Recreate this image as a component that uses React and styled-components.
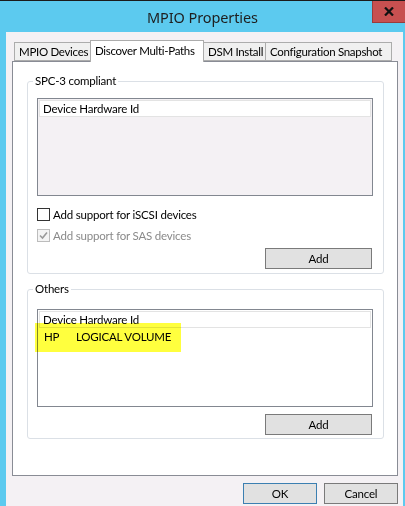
import React from "react";
import styled, { createGlobalStyle } from "styled-components";

/* Page */
const GlobalStyle = createGlobalStyle`
  html, body {
    margin: 0;
    padding: 0;
    background: #5ccaef;
  }
  * {
    box-sizing: border-box;
  }
`;

const UI_FONT = `Lato, "Noto Sans", "Liberation Sans", sans-serif`;

const Window = styled.div`
  width: 405px;
  height: 506px;
  overflow: hidden;
  display: flex;
  flex-direction: column;
  background: #5ccaef;
  border-top: 1px solid #1b1b1b;
  font-family: ${UI_FONT};
  font-size: 11.5px;
  letter-spacing: -0.2px;
  color: #000;
`;

const TitleBar = styled.div`
  height: 31px;
  flex: none;
  display: grid;
  grid-template-columns: 1fr auto 1fr;
  align-items: start;
`;

const Title = styled.div`
  grid-column: 2;
  padding-top: 6px;
  font-family: "Noto Sans", "Open Sans", sans-serif;
  font-size: 14.5px;
  color: #1e1e1e;
  letter-spacing: -0.1px;
`;

const CloseButton = styled.div`
  grid-column: 3;
  justify-self: end;
  width: 33px;
  height: 22px;
  background: #c75050;
  border-left: 1px solid #9b3b3b;
  border-bottom: 1px solid #9b3b3b;
  display: flex;
  align-items: center;
  justify-content: center;
`;

const Client = styled.div`
  flex: 1;
  margin: 0 2px 0 6px;
  background: #f4f1f4;
  padding: 8px 5px 0 6px;
  display: flex;
  flex-direction: column;
`;

/* Tabs */
const TabRow = styled.div`
  display: flex;
  align-items: flex-end;
  height: 21px;
  padding-left: 2px;
`;

const Tab = styled.div`
  position: relative;
  z-index: ${(p) => (p.$active ? 2 : 1)};
  width: ${(p) => p.$width}px;
  height: ${(p) => (p.$active ? 22 : 19)}px;
  margin-bottom: ${(p) => (p.$active ? -1 : 0)}px;
  margin-left: -1px;
  border: 1px solid #acacac;
  border-bottom: ${(p) => (p.$active ? "none" : "1px solid #acacac")};
  background: ${(p) => (p.$active ? "#ffffff" : "#f0f0f0")};
  padding: ${(p) => (p.$active ? "3px 0 0 4px" : "2px 0 0 4px")};
  letter-spacing: -0.3px;
  white-space: nowrap;
  overflow: hidden;
  &:first-child {
    margin-left: 0;
  }
`;

const Panel = styled.div`
  height: 415px;
  flex: none;
  border: 1px solid #898c95;
  background: #ffffff;
  padding: 12px 13px 0 14px;
  display: flex;
  flex-direction: column;
`;

/* Group boxes */
const Group = styled.fieldset`
  margin: ${(p) => p.$top}px 0 0 0;
  padding: 0 10px ${(p) => p.$bottom}px 9px;
  border: 1px solid #dbe0e6;
  border-radius: 3px;
  min-width: 0;
`;

const Legend = styled.legend`
  margin-left: -4px;
  padding: 0 2px;
  line-height: 14px;
  color: #000;
`;

const ListBox = styled.div`
  position: relative;
  margin-top: ${(p) => p.$top}px;
  height: 98px;
  border: 1px solid #828790;
  background: ${(p) => (p.$disabled ? "#f4f1f4" : "#ffffff")};
  padding: 1px;
`;

const ListHeader = styled.div`
  height: 17px;
  border: 1px solid #e3e3e3;
  background: #ffffff;
  padding-left: 3px;
  line-height: 15px;
  white-space: nowrap;
`;

const ListRow = styled.div`
  display: flex;
  height: 17px;
  line-height: 17px;
  padding-left: 5px;
  white-space: nowrap;
`;

const Cell = styled.span`
  width: ${(p) => (p.$width ? `${p.$width}px` : "auto")};
  flex: none;
`;

const Highlight = styled.div`
  position: absolute;
  left: -3px;
  top: 13px;
  width: 146px;
  height: 29px;
  background: #ffff3e;
  mix-blend-mode: multiply;
  pointer-events: none;
`;

/* Checkboxes */
const CheckRow = styled.label`
  display: flex;
  align-items: center;
  gap: 3px;
  height: 13px;
  margin-top: ${(p) => p.$top}px;
  color: ${(p) => (p.$disabled ? "#8a8a8a" : "#000")};
  white-space: nowrap;
`;

const Box = styled.span`
  width: 13px;
  height: 13px;
  flex: none;
  border: 1px solid ${(p) => (p.$disabled ? "#bcbcbc" : "#333333")};
  background: ${(p) => (p.$disabled ? "#f4f4f4" : "#ffffff")};
  display: flex;
  align-items: center;
  justify-content: center;
`;

/* Buttons */
const ButtonRow = styled.div`
  display: flex;
  justify-content: flex-end;
  gap: ${(p) => p.$gap || 0}px;
  margin-top: ${(p) => p.$top}px;
  margin-right: ${(p) => p.$right || 0}px;
`;

const Button = styled.div`
  width: ${(p) => p.$width}px;
  height: 21px;
  border: 1px solid ${(p) => (p.$default ? "#3c7fb1" : "#7a7a7a")};
  background: #e1e1e1;
  display: flex;
  align-items: center;
  justify-content: center;
  padding-bottom: 1px;
`;

const TABS = [
  { label: "MPIO Devices", width: 77 },
  { label: "Discover Multi-Paths", width: 114, active: true },
  { label: "DSM Install", width: 63 },
  { label: "Configuration Snapshot", width: 127 },
];

const Check = ({ color }) => (
  <svg width="9" height="9" viewBox="0 0 9 9">
    <path d="M1 4.5 L3.5 7 L8 1.5" fill="none" stroke={color} strokeWidth="1.6" />
  </svg>
);

export default function App() {
  return (
    <>
      <GlobalStyle />
      <Window>
        <TitleBar>
          <Title>MPIO Properties</Title>
          <CloseButton>
            <svg width="10" height="9" viewBox="0 0 10 9">
              <path d="M1 0.5 L9 8.5 M9 0.5 L1 8.5" stroke="#111" strokeWidth="2.2" />
            </svg>
          </CloseButton>
        </TitleBar>

        <Client>
          <TabRow>
            {TABS.map((t) => (
              <Tab key={t.label} $width={t.width} $active={t.active}>
                {t.label}
              </Tab>
            ))}
          </TabRow>

          <Panel>
            <Group $top={0} $bottom={4}>
              <Legend>SPC-3 compliant</Legend>
              <ListBox $top={10} $disabled>
                <ListHeader>Device Hardware Id</ListHeader>
              </ListBox>

              <CheckRow $top={12}>
                <Box />
                Add support for iSCSI devices
              </CheckRow>
              <CheckRow $top={8} $disabled>
                <Box $disabled>
                  <Check color="#9a9a9a" />
                </Box>
                Add support for SAS devices
              </CheckRow>

              <ButtonRow $top={6} $right={1}>
                <Button $width={107}>Add</Button>
              </ButtonRow>
            </Group>

            <Group $top={8} $bottom={3}>
              <Legend>Others</Legend>
              <ListBox $top={13}>
                <ListHeader>Device Hardware Id</ListHeader>
                <ListRow>
                  <Cell $width={32}>HP</Cell>
                  <Cell>LOGICAL VOLUME</Cell>
                </ListRow>
                <Highlight />
              </ListBox>

              <ButtonRow $top={7} $right={1}>
                <Button $width={107}>Add</Button>
              </ButtonRow>
            </Group>
          </Panel>

          <ButtonRow $top={7} $gap={7}>
            <Button $width={74} $default>
              OK
            </Button>
            <Button $width={74}>Cancel</Button>
          </ButtonRow>
        </Client>
      </Window>
    </>
  );
}
